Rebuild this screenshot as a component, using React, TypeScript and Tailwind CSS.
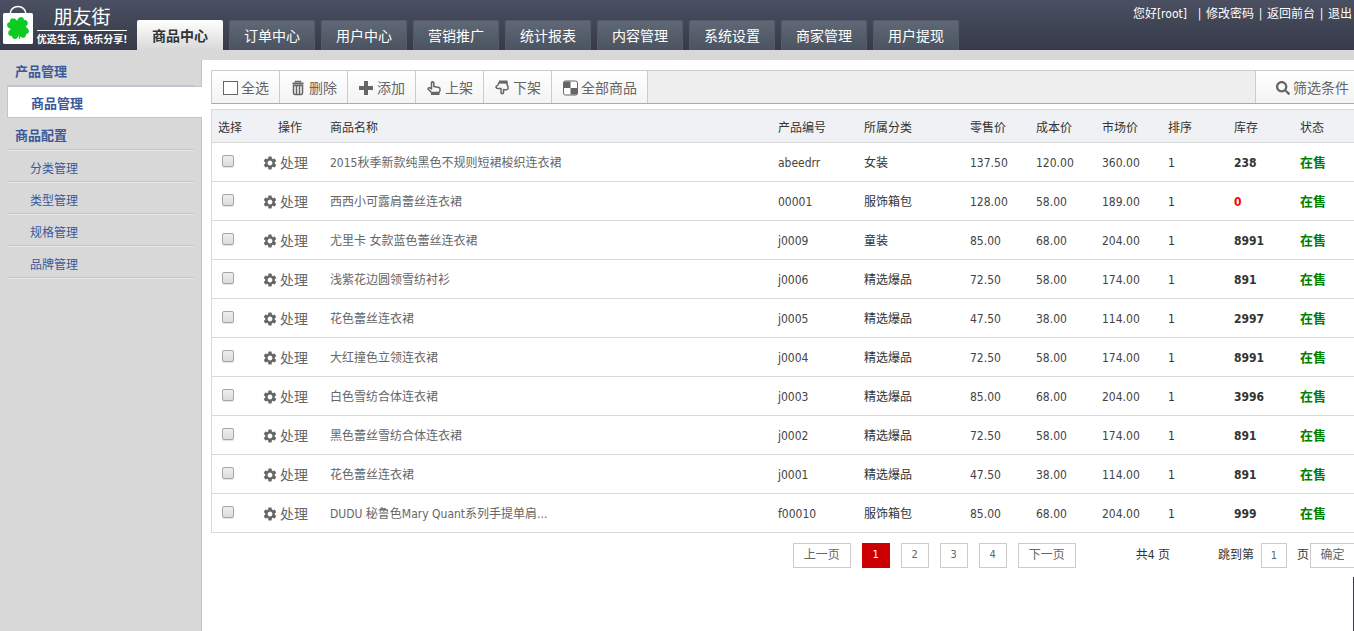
import { useState } from 'react'
import { FaSearch } from 'react-icons/fa'
import { MdSettings } from 'react-icons/md'

interface Product {
  name: string
  code: string
  category: string
  price: string
  cost: string
  market: string
  stock: number
}

const tabs = ['商品中心', '订单中心', '用户中心', '营销推广', '统计报表', '内容管理', '系统设置', '商家管理', '用户提现']

const products: Product[] = [
  { name: '2015秋季新款纯黑色不规则短裙梭织连衣裙', code: 'abeedrr', category: '女装', price: '137.50', cost: '120.00', market: '360.00', stock: 238 },
  { name: '西西小可露肩蕾丝连衣裙', code: '00001', category: '服饰箱包', price: '128.00', cost: '58.00', market: '189.00', stock: 0 },
  { name: '尤里卡 女款蓝色蕾丝连衣裙', code: 'j0009', category: '童装', price: '85.00', cost: '68.00', market: '204.00', stock: 8991 },
  { name: '浅紫花边圆领雪纺衬衫', code: 'j0006', category: '精选爆品', price: '72.50', cost: '58.00', market: '174.00', stock: 891 },
  { name: '花色蕾丝连衣裙', code: 'j0005', category: '精选爆品', price: '47.50', cost: '38.00', market: '114.00', stock: 2997 },
  { name: '大红撞色立领连衣裙', code: 'j0004', category: '精选爆品', price: '72.50', cost: '58.00', market: '174.00', stock: 8991 },
  { name: '白色雪纺合体连衣裙', code: 'j0003', category: '精选爆品', price: '85.00', cost: '68.00', market: '204.00', stock: 3996 },
  { name: '黑色蕾丝雪纺合体连衣裙', code: 'j0002', category: '精选爆品', price: '72.50', cost: '58.00', market: '174.00', stock: 891 },
  { name: '花色蕾丝连衣裙', code: 'j0001', category: '精选爆品', price: '47.50', cost: '38.00', market: '114.00', stock: 891 },
  { name: 'DUDU 秘鲁色Mary Quant系列手提单肩...', code: 'f00010', category: '服饰箱包', price: '85.00', cost: '68.00', market: '204.00', stock: 999 },
]

const leaf = 'M0 0C-2 -1.500 -6 -4 -5.500 -8C-5 -11.500 -1.500 -12 0 -10C1.500 -12 5 -11.500 5.500 -8C6 -4 2 -1.500 0 0Z'

function Logo() {
  return (
    <a href="#" className="flex w-[137px] shrink-0 pl-[3px] pt-[5px] text-white">
      <svg width="30" height="40" viewBox="0 0 30 40" className="shrink-0">
        <path d="M7 9C7.500 -1 22.500 -1 23 9" fill="none" stroke="#fff" strokeWidth="1.500" />
        <rect y="8" width="30" height="31" rx="1.500" fill="#fff" />
        <g fill="#0ccb22" transform="translate(15 23) rotate(-8)">
          {[-45, 45, 135, -135].map((angle) => (
            <path key={angle} d={leaf} transform={`rotate(${angle})`} />
          ))}
          <path d="M0 0Q1.500 6 0 11" fill="none" stroke="#0ccb22" strokeWidth="1.200" />
        </g>
      </svg>
      <span className="ml-1 flex w-[90px] flex-col items-center whitespace-nowrap">
        <span className="w-full border-b border-white text-center text-[19px] leading-[25px]">朋友街</span>
        <span className="text-[10px] font-bold leading-[17px]">优选生活, 快乐分享!</span>
      </span>
    </a>
  )
}

function SquareIcon() {
  return (
    <svg width="16" height="16" viewBox="0 0 16 16" className="-mx-px shrink-0">
      <rect x="1.500" y="1.500" width="14" height="13" fill="#fff" stroke="#666" />
    </svg>
  )
}

function TrashIcon() {
  return (
    <svg width="14" height="16" viewBox="0 0 14 16" className="shrink-0" fill="none" stroke="#666">
      <path d="M4.500 2.500V1.500H9.500V2.500" strokeWidth="1.500" />
      <path d="M1.500 3.500H12.500" strokeWidth="2" />
      <path d="M2.500 5.500V13Q2.500 14.500 4 14.500H10Q11.500 14.500 11.500 13V5.500Z" strokeWidth="1.500" />
      <path d="M5.500 6V14M8.500 6V14" strokeWidth="1.500" />
    </svg>
  )
}

function PlusIcon() {
  return (
    <svg width="14" height="16" viewBox="0 0 14 16" className="shrink-0">
      <path d="M5 1H9V6H14V10H9V15H5V10H0V6H5Z" fill="#666" />
    </svg>
  )
}

function HandIcon({ down = false }: { down?: boolean }) {
  return (
    <svg width="14" height="16" viewBox="0 0 14 16" className="shrink-0" fill="none" stroke="#666" strokeWidth="1.500" strokeLinejoin="round">
      {down ? (
        <path d="M4 2.500H12V5L13 6V9Q11 10.500 8.500 9.500V13Q7.300 14.500 6 13V8.500H3Q1 8.500 1 6.500L3 5Z" />
      ) : (
        <path d="M4.500 12.500L1 9Q1.500 7 3.500 8L4.500 9V2.500Q5.500 .8 6.800 2.500V6.500L12 7.500Q13 8 13 9V10.500L12 12.500Z" />
      )}
      <path d={down ? 'M4 2H12.500' : 'M4 13.500H12.500'} strokeWidth="3" />
    </svg>
  )
}

function GridIcon() {
  return (
    <svg width="15" height="16" viewBox="0 0 15 16" className="-mr-px shrink-0">
      <rect x=".5" y="1" width="14" height="14" rx="2" fill="#fff" stroke="#666" />
      <path d="M1 1.500H7.500V8H1ZM7.500 8H14V14.500H7.500Z" fill="#666" />
    </svg>
  )
}

const tools = [
  { label: '全选', icon: <SquareIcon /> },
  { label: '删除', icon: <TrashIcon /> },
  { label: '添加', icon: <PlusIcon /> },
  { label: '上架', icon: <HandIcon /> },
  { label: '下架', icon: <HandIcon down /> },
  { label: '全部商品', icon: <GridIcon /> },
]

function Header() {
  return (
    <header className="flex h-[50px] items-stretch bg-linear-to-b from-[#4a5062] to-[#363a49] text-white">
      <Logo />
      <nav className="flex items-end gap-1.5">
        {tabs.map((tab, i) => (
          <a
            key={tab}
            href="#"
            className={
              i === 0
                ? 'h-[30px] w-[86px] rounded-t-xs bg-linear-to-b from-white to-[#d8d8d8] text-center text-sm font-bold leading-8 text-[#333]'
                : 'h-[30px] w-[86px] rounded-t-xs border border-b-0 border-[#535b6a] bg-linear-to-b from-[#606877] to-[#4a535f] text-center text-sm leading-[30px]'
            }
          >
            {tab}
          </a>
        ))}
      </nav>
      <div className="ml-auto flex h-7 items-center whitespace-nowrap pr-0.5">
        <span className="mr-1.5">您好[root]</span>
        {['修改密码', '返回前台', '退出'].map((text) => (
          <span key={text} className="flex">
            <span className="w-[13px] text-center">|</span>
            <a href="#">{text}</a>
          </span>
        ))}
      </div>
    </header>
  )
}

function Sidebar() {
  return (
    <aside className="w-[201px] shrink-0 pl-[7px] pt-1 text-[#3b5998]">
      <h2 className="mr-[7px] h-8 border-b border-[#c4c4c4] pl-2 text-[13px] font-bold leading-[35px]">产品管理</h2>
      <a href="#" className="relative -mr-px block h-8 border-y border-l border-[#c0c5d2] bg-white pl-[23px] text-[13px] font-bold leading-[34px]">
        商品管理
      </a>
      <h2 className="mr-[7px] h-8 border-b border-[#c4c4c4] pl-2 text-[13px] font-bold leading-[35px] shadow-[0_1px_#e8e8e8]">商品配置</h2>
      {['分类管理', '类型管理', '规格管理', '品牌管理'].map((item) => (
        <a key={item} href="#" className="mr-[7px] block h-8 border-b border-[#c4c4c4] pl-[23px] leading-[38px] shadow-[0_1px_#e8e8e8]">
          {item}
        </a>
      ))}
    </aside>
  )
}

function Toolbar() {
  return (
    <div className="flex h-[34px] border-y border-l border-t-[#ccc] border-b-[#aaa] border-l-[#ccc] bg-[#eee] text-sm text-[#666]">
      {tools.map((tool) => (
        <button key={tool.label} type="button" className="flex items-center gap-1 border-r border-[#ccc] bg-linear-to-b from-white to-[#f3f3f3] pl-[11px] pr-2.5 pt-0.5">
          {tool.icon}
          {tool.label}
        </button>
      ))}
      <button type="button" className="ml-auto flex items-center gap-[3px] border-l border-[#ccc] bg-linear-to-b from-white to-[#f3f3f3] pl-5 pr-[5px] pt-0.5">
        <FaSearch size={14} />
        筛选条件
      </button>
    </div>
  )
}

function ProductTable() {
  const [checked, setChecked] = useState<string[]>([])

  const toggle = (code: string) =>
    setChecked(checked.includes(code) ? checked.filter((c) => c !== code) : [...checked, code])

  return (
    <div className="mt-[5px] border-l border-t border-[#d9d9d9]">
      <table className="w-full table-fixed text-left whitespace-nowrap [&_td]:p-0 [&_td]:pl-1.5 [&_td]:pt-0.5 [&_th]:p-0 [&_th]:pl-1.5 [&_th]:pt-1 [&_th]:font-normal">
        <colgroup>
          <col className="w-11" />
          <col className="w-[68px]" />
          <col />
          <col className="w-[86px]" />
          <col className="w-[106px]" />
          <col className="w-[66px]" />
          <col className="w-[66px]" />
          <col className="w-[66px]" />
          <col className="w-[66px]" />
          <col className="w-[66px]" />
          <col className="w-[60px]" />
        </colgroup>
        <thead>
          <tr className="h-8 border-b border-[#d9d9d9] bg-[#f0f1f4]">
            <th>选择</th>
            <th><span className="pl-4">操作</span></th>
            <th>商品名称</th>
            <th>产品编号</th>
            <th>所属分类</th>
            <th>零售价</th>
            <th>成本价</th>
            <th>市场价</th>
            <th>排序</th>
            <th>库存</th>
            <th>状态</th>
          </tr>
        </thead>
        <tbody>
          {products.map((p) => (
            <tr key={p.code} className="h-[39px] border-b border-[#d9d9d9]">
              <td>
                <input
                  type="checkbox"
                  aria-label={p.name}
                  checked={checked.includes(p.code)}
                  onChange={() => toggle(p.code)}
                  className="mb-1 ml-1 block size-3 appearance-none rounded-xs border border-[#a6a6a6] bg-linear-to-b from-[#eee] to-[#dcdcdc] shadow-[0_1px_#e4e4e4] checked:from-[#888] checked:to-[#666]"
                />
              </td>
              <td>
                <button type="button" className="flex items-center gap-0.5 text-sm text-[#666]">
                  <MdSettings size={16} />
                  处理
                </button>
              </td>
              <td className="text-[#666]">{p.name}</td>
              <td className="text-[#444]">{p.code}</td>
              <td>{p.category}</td>
              <td className="text-[#444]">{p.price}</td>
              <td className="text-[#444]">{p.cost}</td>
              <td className="text-[#444]">{p.market}</td>
              <td>1</td>
              <td className={p.stock === 0 ? 'font-bold text-[#f00]' : 'font-bold'}>{p.stock}</td>
              <td className="text-[13px] font-bold text-[#008000]">在售</td>
            </tr>
          ))}
        </tbody>
      </table>
    </div>
  )
}

function Pagination() {
  const [page, setPage] = useState(1)

  return (
    <div className="mt-2.5 flex items-center justify-end whitespace-nowrap">
      <div className="mr-[60px] flex gap-[11px] text-[#666]">
        <button type="button" className="h-[25px] w-[58px] border border-[#ccc]">上一页</button>
        {[1, 2, 3, 4].map((n) => (
          <button
            key={n}
            type="button"
            onClick={() => setPage(n)}
            className={n === page ? 'h-[25px] w-7 bg-[#c00] text-[11px] text-white' : 'h-[25px] w-7 border border-[#ccc] text-[11px]'}
          >
            {n}
          </button>
        ))}
        <button type="button" className="h-[25px] w-[58px] border border-[#ccc]">下一页</button>
      </div>
      <span className="mr-12">共4 页</span>
      <label htmlFor="jump">跳到第</label>
      <input id="jump" defaultValue="1" className="ml-[7px] mr-2.5 h-[25px] w-[26px] border border-[#ccc] text-center text-[11px] text-[#666]" />
      <span>页</span>
      <button type="button" className="ml-px h-[25px] w-11 border border-r-0 border-[#ccc] text-[#666]">确定</button>
    </div>
  )
}

export default function App() {
  return (
    <div className="flex min-h-screen flex-col bg-[#d8d8d8] font-['DejaVu_Sans_Condensed','Noto_Sans_CJK_SC',sans-serif] text-xs text-[#333]">
      <Header />
      <div className="flex flex-1">
        <Sidebar />
        <main className="mt-2.5 min-w-0 flex-1 border-l border-[#c0c5d2] bg-white pl-[9px] pt-2.5">
          <Toolbar />
          <ProductTable />
          <Pagination />
        </main>
      </div>
      <div className="fixed bottom-0 right-0 h-[54px] w-px bg-[#3b3b42]" />
    </div>
  )
}
